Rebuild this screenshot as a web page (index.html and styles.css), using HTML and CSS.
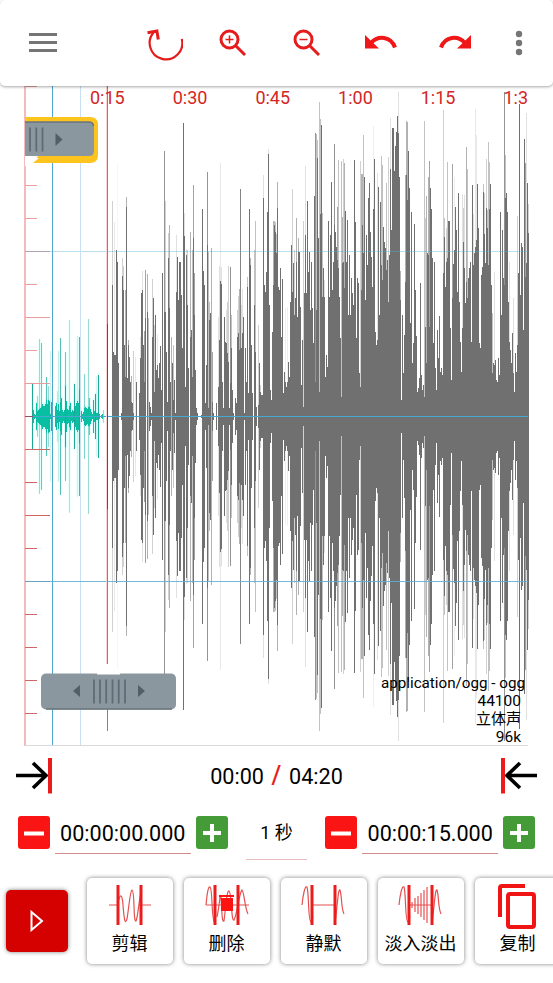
FILE: index.html
```
<!DOCTYPE html>
<html lang="zh">
<head>
  <meta charset="UTF-8" />
  <meta name="viewport" content="width=device-width, initial-scale=1.0" />
  <title>音频剪辑</title>
  <link rel="stylesheet" href="styles.css">
</head>
<body>
  <div class="app">
    <header class="toolbar">
      <svg class="menu" width="30" height="30" viewBox="0 0 30 30"><path d="M1 5.5h28M1 13.5h28M1 21.5h28" /></svg>
      <div class="tools">
        <svg class="reload" width="38" height="38" viewBox="0 0 38 38"><path d="M36.800 15A16.300 16.300 0 1 1 9 8" /><path class="tip" d="M2.500 8.800l9.400-1.800 1.400 8.500" /></svg>
        <svg class="lens" width="30" height="30" viewBox="0 0 30 30"><circle cx="11.500" cy="11.500" r="8.500" /><path d="M18 18l9 9" /><path class="thin" d="M7.500 11.500h8M11.500 7.500v8" /></svg>
        <svg class="lens" width="30" height="30" viewBox="0 0 30 30"><circle cx="11.500" cy="11.500" r="8.500" /><path d="M18 18l9 9" /><path class="thin" d="M7.500 11.500h8" /></svg>
        <svg class="undo" width="32" height="16" viewBox="0 0 32 16"><path class="curve" d="M6 8C13 0 26 1 30 12.500" /><path class="head" d="M0 0v13.500h14z" /></svg>
        <svg class="undo" width="32" height="16" viewBox="0 0 32 16"><g transform="matrix(-1 0 0 1 32 0)"><path class="curve" d="M6 8C13 0 26 1 30 12.500" /><path class="head" d="M0 0v13.500h14z" /></g></svg>
      </div>
      <svg class="more" width="8" height="26" viewBox="0 0 8 26"><circle cx="4" cy="4" r="3.200" /><circle cx="4" cy="13" r="3.200" /><circle cx="4" cy="22" r="3.200" /></svg>
    </header>

    <main class="track">
      <svg id="wave" class="wave" width="553" height="660" viewBox="0 86 553 660"></svg>
      <div class="times">
        <span>0:15</span><span>0:30</span><span>0:45</span><span>1:00</span><span>1:15</span><span>1:3</span>
      </div>
      <svg class="handle handle-start" width="75" height="50" viewBox="0 0 75 50">
        <path class="blank" d="M-2 40h12l-3 11H-2z" />
        <path class="glow" d="M0 1h65q8 0 8 8v30q0 8-8 8H8l6-5H0z" />
        <path class="blank" d="M0 40h13l-6 8H0z" />
        <path class="grip" d="M0 6h64q5 0 5 5v24q0 5-5 5H0z" />
        <path class="edge" d="M0 6h64q4 0 4.500 4" />
        <path class="bars" d="M5 11.500v24M11.300 11.500v24M17.500 11.500v24" />
        <path class="arrow" d="M30.500 17l7 6.500-7 6.500z" />
      </svg>
      <svg class="handle handle-end" width="137" height="38" viewBox="0 0 137 38">
        <rect class="grip" x="0" y="0.500" width="135" height="36" rx="5" />
        <path class="edge" d="M5 36h126" />
        <path class="bars" d="M53 6.500v24M59 6.500v24M65.200 6.500v24M71.500 6.500v24M77.700 6.500v24M84 6.500v24" />
        <path class="arrow" d="M39 12v12l-7-6zM97 12v12l7-6z" />
        <path class="blank" d="M56 0h23v1.500H56z" />
      </svg>
      <div class="info">
        <span class="format">application/ogg - ogg</span>
        <span>44100</span>
        <span class="cjk">立体声</span>
        <span>96k</span>
      </div>
    </main>

    <section class="position">
      <svg class="jump" width="36" height="36" viewBox="0 0 36 36"><path class="line" d="M0 17.500h30M17 5l13 12.500L17 30" /><path class="bar" d="M34 0v35.500" /></svg>
      <div class="clock"><span>00:00</span><i>/</i><span>04:20</span></div>
      <svg class="jump" width="36" height="36" viewBox="0 0 36 36"><path class="line" d="M36 17.500H6M19 5L6 17.500 19 30" /><path class="bar" d="M2 0v35.500" /></svg>
    </section>

    <section class="range">
      <button class="step minus"><svg width="32" height="32"><path d="M6 16.500h20" /></svg></button>
      <span class="value">00:00:00.000</span>
      <button class="step plus"><svg width="32" height="32"><path d="M7 16h18M16 7v18" /></svg></button>
      <span class="unit">1 秒</span>
      <button class="step minus"><svg width="32" height="32"><path d="M6 16.500h20" /></svg></button>
      <span class="value">00:00:15.000</span>
      <button class="step plus"><svg width="32" height="32"><path d="M7 16h18M16 7v18" /></svg></button>
    </section>

    <footer class="actions">
      <button class="play"><svg width="14" height="22" viewBox="0 0 14 22"><path d="M1.500 2v18l10.500-9z" /></svg></button>
      <button class="action">
        <svg width="46" height="44" viewBox="0 0 46 44"><path class="sig" d="M2 22h9M32 22h12M11 22C12 12 15 8 16 22C17 35 18 43 20 36C22 24 23 8 25 7C28 8 26 39 29 38C31 34 32 16 34 10" /><path class="cut" d="M11 2v40M34 2v40" /></svg>
        <span>剪辑</span>
      </button>
      <button class="action">
        <svg width="46" height="44" viewBox="0 0 46 44"><path class="sig" d="M2 22h43M2 22C3 12 4 3 6 4C9 6 7 39 11 40M13 34C16 20 16 8 17 14C18 30 18 40 20 38C22 22 23 7 25 8C28 10 27 39 30 37C33 32 35 10 38 7C40 8 41 26 44 31" /><path class="cut" d="M11 2v40M34 2v40" /><path class="bin" d="M17 15h12v13H17zM15 12h15v2H15z" /></svg>
        <span>删除</span>
      </button>
      <button class="action">
        <svg width="46" height="44" viewBox="0 0 46 44"><path class="sig" d="M11 22h23M1 22C2 12 4 2 6 4C8 9 7 39 10 39L12 33M34 40C36 28 37 5 39 7C41 13 40 25 43 31" /><path class="cut" d="M11 2v40M34 2v40" /></svg>
        <span>静默</span>
      </button>
      <button class="action">
        <svg width="46" height="44" viewBox="0 0 46 44"><path class="sig" d="M11 22h23M1 22C2 12 4 2 6 4C8 9 7 39 10 39L12 33M34 40C36 28 37 5 39 7C41 13 40 25 43 31M14 19v6M17 15v14M20 13v18M23 10v24M26 7v30M29 4v36" /><path class="cut" d="M11 2v40M34 2v40" /></svg>
        <span>淡入淡出</span>
      </button>
      <button class="action">
        <svg width="46" height="44" viewBox="0 0 46 44"><path class="copy" d="M5 34V5q0-2 2-2h23" /><rect class="copy" x="13" y="11" width="26" height="33" rx="2" /></svg>
        <span>复制</span>
      </button>
    </footer>
  </div>
  <script src="waveform.js"></script>
</body>
</html>
```
FILE: styles.css
```
* {
  box-sizing: border-box;
}

body {
  margin: 0;
  background-color: #fff;
  font-family: Roboto, 'Noto Sans CJK SC', sans-serif;
  color: #000;
}

svg {
  display: block;
  fill: none;
  flex: none;
}

button {
  border: none;
  padding: 0;
  font-family: inherit;
  color: inherit;
  flex: none;
}

.app {
  width: 553px;
  height: 983px;
  overflow: hidden;
}

.toolbar {
  height: 86px;
  display: flex;
  align-items: center;
  padding: 0 30px 0 28px;
  border-radius: 5px;
  background-color: #fff;
  box-shadow: 0 1px 3px rgba(0,0,0,0.35);
  position: relative;
  z-index: 2;
}

.menu {
  stroke: #757575;
  stroke-width: 3;
  margin-top: 2px;
}

.tools {
  display: flex;
  align-items: center;
  margin-left: 87px;
}

.reload {
  stroke: #e51c1c;
  stroke-width: 2.2;
}

.reload .tip {
  stroke-width: 3;
}

.lens {
  stroke: #e51c1c;
  stroke-width: 3;
  margin-left: 35px;
}

.lens + .lens {
  margin-left: 44px;
}

.lens .thin {
  stroke-width: 1.5;
}

.undo {
  margin-left: 43px;
}

.undo + .undo {
  margin-left: 42px;
}

.undo .curve {
  stroke: #ef1717;
  stroke-width: 4;
}

.undo .head {
  fill: #ef1717;
}

.more {
  fill: #757575;
  margin-left: auto;
}

.track {
  position: relative;
  height: 660px;
}

/* labels, handles and file info lie over the waveform */
.times {
  position: absolute;
  top: 1px;
  left: 90px;
  width: 438px;
  display: grid;
  grid-template-columns: repeat(6, 82.7px);
  overflow: hidden;
  font-size: 18px;
  line-height: 21px;
  color: #d32626;
}

.handle {
  position: absolute;
}

.handle-start {
  left: 25px;
  top: 30px;
}

.handle-end {
  left: 41px;
  top: 587px;
}

.glow {
  fill: #fcc41c;
}

.grip {
  fill: #8b979f;
}

.edge {
  stroke: #68747d;
  stroke-width: 1.5;
}

.bars {
  stroke: #606c75;
  stroke-width: 1.8;
}

.arrow {
  fill: #535f68;
}

.blank {
  fill: #fff;
}

.info {
  position: absolute;
  right: 32px;
  bottom: 0;
  display: flex;
  flex-direction: column;
  align-items: flex-end;
  font-size: 15.5px;
  line-height: 18px;
}

.info .format {
  margin-right: -4px;
  font-size: 15.2px;
}

.info .cjk {
  font-size: 15px;
}

.position {
  height: 60px;
  display: flex;
  align-items: center;
  justify-content: space-between;
  padding: 0 16px;
}

.jump .line {
  stroke: #000;
  stroke-width: 3.6;
}

.jump .bar {
  stroke: #ed1c1c;
  stroke-width: 4;
}

.clock {
  font-size: 21.6px;
  display: flex;
  align-items: center;
}

.clock i {
  font-style: normal;
  color: #ed1c1c;
  font-size: 25px;
  font-weight: 500;
  line-height: 28px;
  width: 25px;
  text-align: center;
}

.range {
  height: 54px;
  display: flex;
  align-items: flex-start;
  padding: 0 18px;
}

.step {
  width: 32px;
  height: 33px;
  border-radius: 3px;
  margin-top: 10px;
}

.step path {
  stroke: #fff;
  stroke-width: 4;
}

.minus {
  background-color: #fb1414;
}

.plus {
  background-color: #459b38;
}

.value {
  width: 136px;
  height: 48px;
  margin: 0 5px;
  padding-top: 15px;
  text-align: center;
  font-size: 21.6px;
  line-height: 26px;
  white-space: nowrap;
  border-bottom: 1px solid #d58b8b;
}

.unit {
  width: 62px;
  height: 54px;
  margin: 0 18px;
  padding-top: 15px;
  font-size: 18px;
  line-height: 24px;
  text-align: center;
  border-bottom: 1px solid #e8bebe;
}

.actions {
  display: flex;
  align-items: center;
  gap: 11px;
  margin-top: 18px;
  padding-left: 6px;
}

.play {
  width: 62px;
  height: 62px;
  display: flex;
  align-items: center;
  justify-content: center;
  margin-right: 8px;
  border-radius: 5px;
  background-color: #d50000;
  box-shadow: 0 0 4px rgba(0,0,0,0.5);
}

.play path {
  stroke: #fff;
  stroke-width: 2;
}

.action {
  width: 86px;
  height: 86px;
  display: flex;
  flex-direction: column;
  align-items: center;
  padding: 5px 1px 0 0;
  border-radius: 5px;
  background-color: #fff;
  box-shadow: 0 0 4px rgba(0,0,0,0.5);
  font-size: 18px;
  line-height: 24px;
}

.action svg {
  overflow: visible;
}

.action span {
  margin-top: 5px;
}

.sig {
  stroke: #e65050;
  stroke-width: 1.2;
}

.cut {
  stroke: #ed1c1c;
  stroke-width: 3;
}

.bin {
  fill: #ff1212;
}

.copy {
  stroke: #f01414;
  stroke-width: 4;
}
```
FILE: waveform.js
```
const svg = document.getElementById("wave");
const MID = 416;

function rect(x, y, w, h, color, opacity) {
  const r = document.createElementNS("http://www.w3.org/2000/svg", "rect");
  r.setAttribute("x", x);
  r.setAttribute("y", y);
  r.setAttribute("width", w);
  r.setAttribute("height", h);
  r.setAttribute("fill", color);
  if (opacity) r.setAttribute("opacity", opacity);
  r.setAttribute("shape-rendering", "crispEdges");
  svg.appendChild(r);
}

function bar(x, amp, color, opacity) {
  rect(x, MID - amp, 1, amp * 2 + 1, color, opacity);
}

// loud part: one level per pixel column from x = 112, 1008 is silence, 3 units per pixel
const levels = [
  615,815,825,825,510,545,850,1008,1008,1000,588,630,795,890,380,895,795,830,905,965,970,1000,1008,1008,905,1008,1008,940,835,640,
  630,795,905,715,1008,695,1008,965,980,1000,770,655,935,705,870,855,895,850,797,930,580,1008,695,695,815,965,535,685,905,1008,
  850,960,900,1000,635,530,660,545,545,645,805,130,468,920,525,675,865,1008,770,750,890,475,705,870,985,1000,1008,1008,1008,1005,
  387,573,615,970,855,495,985,720,700,1008,965,1000,1008,1008,970,1008,920,780,603,612,905,985,712,785,790,820,845,985,910,805,
  930,1000,1008,955,970,770,760,810,805,805,760,710,1000,805,905,622,940,387,555,795,940,1008,675,815,980,1008,975,850,935,945,
  945,355,615,635,575,397,222,675,930,960,755,615,435,455,520,385,620,630,565,770,597,940,875,905,920,905,845,890,665,495,
  635,550,705,655,545,710,515,515,680,915,780,980,640,465,640,362,575,515,690,545,685,790,348,905,690,235,475,935,402,135,
  650,565,650,890,825,860,422,650,465,307,630,545,435,455,500,540,565,650,775,950,550,545,625,393,545,420,705,525,705,595,
  640,675,240,425,775,595,610,880,920,630,435,520,290,660,465,555,355,310,457,530,620,387,237,755,795,780,322,705,365,555,
  600,440,487,505,570,540,665,525,268,450,143,143,272,198,155,108,158,290,660,960,705,880,765,605,285,360,213,325,730,395,
  850,790,432,630,768,935,925,895,610,885,930,915,950,740,850,520,525,740,325,387,535,790,545,865,930,750,835,708,875,865,
  885,580,470,620,545,535,422,422,745,900,655,553,510,380,450,635,340,665,785,875,745,487,565,670,605,655,595,565,545,785,
  315,555,519,500,480,312,445,790,805,585,560,335,462,548,385,445,555,388,312,615,880,850,855,840,900,905,835,885,397,705,
  450,595,615,355,338,397,665,785,810,850,760,880,935,820,875,795,580,72,645,488,500,750,178,590,550,310,460
];

// short spikes behind them: [offset, level, opacity]
const spikes = [
  [36,363,.3],[42,427,.15],[51,250,.05],[66,533,.3],[69,558,.3],[75,630,.5],[78,350,.5],[84,780,.5],[93,888,.5],[99,813,.3],[105,830,.15],
  [120,770,.2],[126,573,.2],[132,752,.6],[135,570,.6],[141,583,.5],[144,715,.4],[156,598,.3],[162,735,.3],[171,762,.15],[192,212,.7],
  [195,363,.3],[204,460,.3],[207,435,.5],[213,770,.5],[219,795,.4],[228,465,.2],[252,400,.2],[258,508,.2],[261,510,.3],[270,457,.5],
  [276,510,.4],[279,315,.6],[282,578,.6],[321,277,.7],[324,515,.4],[327,665,.4],[333,505,.5],[336,815,.6],[354,710,.2],[357,558,.2],
  [360,250,.15],[363,560,.2],[378,690,.2],[381,665,.3],[384,558,.3],[390,560,.7],[393,705,.4],[411,690,.3],[414,648,.3],[417,627,.5],
  [420,327,.8],[423,675,.2],[426,627,.2],[441,590,.4],[450,535,.5],[462,510,.4],[465,422,.4],[474,735,.3],[480,915,.3],[489,285,.2],
  [504,208,.2],[519,422,.5],[522,422,.4],[525,425,.4],[528,463,.4],[531,307,.5],[555,685,.1],[561,680,.1],[576,328,.3],[582,510,.3],
  [588,413,.5],[594,475,.5],[609,422,.3],[615,258,.2],[645,160,.7],[648,163,.4],[651,180,.4],[657,67,.4],[660,117,.4],[663,252,.5],
  [666,400,.4],[672,600,.2],[693,380,.2],[702,192,.7],[711,380,.6],[714,240,.4],[723,243,.4],[726,410,.5],[729,237,.3],[732,250,.5],
  [762,280,.2],[774,677,.4],[780,243,.3],[783,282,.5],[786,282,.5],[789,165,.4],[819,138,.1],[831,280,.2],[843,228,.4],[846,255,.4],
  [858,310,.4],[864,230,.3],[870,115,.2],[894,37,.2],[900,573,.5],[915,285,.5],[918,123,.5],[921,127,.5],[927,372,.4],[972,123,.4],
  [975,413,.3],[978,348,.5],[984,290,.5],[987,243,.6],[1029,90,.3],[1032,415,.4],[1038,445,.3],[1041,245,.4],[1056,253,.6],[1062,290,.1],
  [1086,343,.2],[1089,385,.3],[1092,345,.2],[1098,202,.5],[1101,267,.4],[1119,403,.2],[1125,87,.15],[1128,165,.15],[1149,313,.4],
  [1152,340,.3],[1158,237,.3],[1161,390,.4],[1164,187,.4],[1167,245,.4],[1176,700,.4],[1182,577,.2],[1212,35,.7],[1215,225,.4],
  [1221,567,.3],[1227,545,.2],[1239,655,.2],[1251,408,.3],[1275,250,.6],[1278,98,.2],[1284,372,.3]
];

// quiet selected part, pixels from the middle, from x = 32
const quiet = [
  32,6,2,1,13,5,6,7,8,9,12,10,10,12,16,12,16,15,2,14,2,0,0,10,13,6,12,5,14,18,6,4,6,30,15,
  7,6,10,13,4,6,5,32,10,13,15,13,26,7,5,2,4,8,9,8,7,9,9,7,4,2,16,5,22,3,3,41,2,0,1,2
];
const quietSpikes = [
  [37,20,.4],[39,77,.4],[41,73,.6],[46,39,.7],[48,30,.4],[50,65,.12],[57,25,.2],[58,65,.2],[60,78,.7],[65,64,.6],
  [69,96,.3],[77,80,.15],[79,79,.8],[84,42,.5],[88,97,.4],[89,18,.6],[96,40,.1],[103,6,.4]
];

// selected area glow
quietSpikes.forEach(s => rect(s[0] - 1, MID - s[1], 3, s[1] * 2, "#7ffff0", 0.12));
quiet.forEach((a, i) => { if (a > 4) rect(31 + i, MID - a - 2, 3, a * 2 + 4, "#9ffff4", 0.22); });

spikes.forEach(s => bar(100 + s[0] / 3, (1008 - s[1]) / 3, "#666", s[2]));
levels.forEach((v, i) => { if (v < 1008) bar(112 + i, (1008 - v) / 3, "#707070"); });
quietSpikes.forEach(s => bar(s[0], s[1], "#16a795", s[2]));
quiet.forEach((a, i) => { if (a) bar(32 + i, a, a > 19 ? "#1ea797" : "#08bfa4"); });

// scale on the left
rect(24, 86, 2, 660, "#f7baba");
for (let i = 0; i < 21; i++) {
  const y = 86 + i * 33;
  const wide = y > 240 && y < 600 && i % 2 === 1;
  rect(25, y, wide ? 25 : 12, 1, i > 10 ? "#cf6666" : "#e99d9d");
}

// grid, selection edge and bottom border
rect(25, 251, 503, 1, "#59afd2", 0.4);
rect(80, 86, 1, 660, "#c8e0f1");
rect(52, 86, 1, 660, "#4ea8cc");
rect(25, 581, 503, 1, "#59afd2", 0.85);
rect(25, MID, 503, 1, "#45a9d2");
rect(25, MID, 8, 1, "#8d5162");
rect(106, 86, 2, 578, "#fbd5d5");
rect(107, 86, 1, 578, "#d06464");
rect(107, 324, 1, 185, "#8e3a3a");
rect(107, 709, 1, 22, "#d06464");
rect(25, 745, 503, 1, "#d9d9d9");
```
